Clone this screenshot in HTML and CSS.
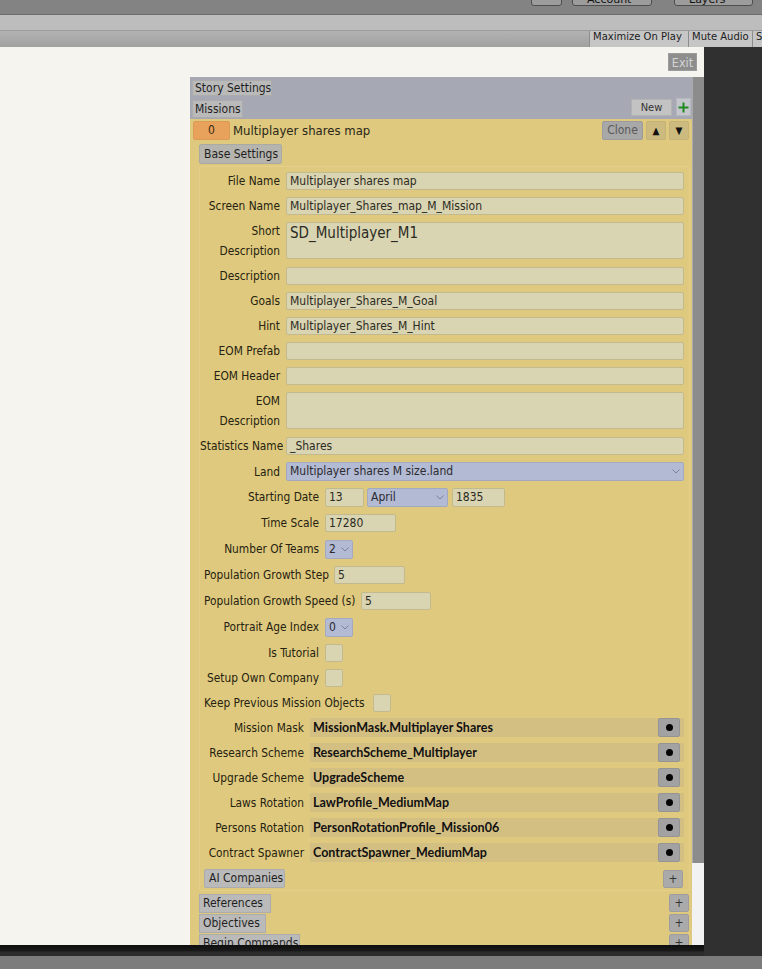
FILE: index.html
```html
<!DOCTYPE html>
<html>
<head>
<meta charset="utf-8">
<link rel="stylesheet" href="styles.css">
</head>
<body>
<div class="topbar">
  <div class="tb-btn tb-icon"></div>
  <div class="tb-btn tb-account">Account</div>
  <div class="tb-btn tb-layers">Layers</div>
</div>
<div class="band"></div>
<div class="toolbar">
  <span class="tool">Maximize On Play</span>
  <span class="tool">Mute Audio</span>
  <span class="tool tool-cut">Stats</span>
</div>
<div class="main">
  <div class="gameview">
    <div class="exit-row"><span class="exit">Exit</span></div>
    <div class="panel">
      <div class="panel-body">
        <div class="header">
          <div class="tab tab-story">Story Settings</div>
          <div class="header-row">
            <div class="tab tab-missions">Missions</div>
            <div class="btn-new">New</div>
            <div class="btn-plus-green">
              <svg width="11" height="11" viewBox="0 0 11 11"><path d="M5.5 0.5v10M0.5 5.5h10" stroke="#1f8a1f" stroke-width="2"/></svg>
            </div>
          </div>
        </div>
        <div class="yellow">
          <div class="mission-row">
            <div class="idx">0</div>
            <div class="mission-name">Multiplayer shares map</div>
            <div class="btn-clone">Clone</div>
            <div class="btn-arrow">▲</div>
            <div class="btn-arrow">▼</div>
          </div>
          <div class="tab tab-base">Base Settings</div>
          <div class="group">
            <div class="row"><div class="lbl w80">File Name</div><div class="field grow">Multiplayer shares map</div></div>
            <div class="row"><div class="lbl w80">Screen Name</div><div class="field grow">Multiplayer_Shares_map_M_Mission</div></div>
            <div class="row row-tall"><div class="lbl w80 two">Short<br>Description</div><div class="field grow area big">SD_Multiplayer_M1</div></div>
            <div class="row"><div class="lbl w80">Description</div><div class="field grow"></div></div>
            <div class="row"><div class="lbl w80">Goals</div><div class="field grow">Multiplayer_Shares_M_Goal</div></div>
            <div class="row"><div class="lbl w80">Hint</div><div class="field grow">Multiplayer_Shares_M_Hint</div></div>
            <div class="row"><div class="lbl w80">EOM Prefab</div><div class="field grow"></div></div>
            <div class="row"><div class="lbl w80">EOM Header</div><div class="field grow"></div></div>
            <div class="row row-tall"><div class="lbl w80 two">EOM<br>Description</div><div class="field grow area"></div></div>
            <div class="row r26"><div class="lbl w80">Statistics Name</div><div class="field grow">_Shares</div></div>
            <div class="row"><div class="lbl w80">Land</div><div class="drop grow">Multiplayer shares M size.land<svg class="chev" width="8" height="5" viewBox="0 0 8 5"><path d="M0.5 0.5L4 4L7.5 0.5" fill="none" stroke="#7d8296" stroke-width="1"/></svg></div></div>
            <div class="row r26"><div class="lbl w119">Starting Date</div><div class="field f-day">13</div><div class="drop d-month">April<svg class="chev" width="8" height="5" viewBox="0 0 8 5"><path d="M0.5 0.5L4 4L7.5 0.5" fill="none" stroke="#7d8296" stroke-width="1"/></svg></div><div class="field f-year">1835</div></div>
            <div class="row r26"><div class="lbl w119">Time Scale</div><div class="field f-num">17280</div></div>
            <div class="row r26"><div class="lbl w119">Number Of Teams</div><div class="drop d-small">2<svg class="chev" width="8" height="5" viewBox="0 0 8 5"><path d="M0.5 0.5L4 4L7.5 0.5" fill="none" stroke="#7d8296" stroke-width="1"/></svg></div></div>
            <div class="row r26 pl4"><div class="lbl left w126">Population Growth Step</div><div class="field f-num ml4">5</div></div>
            <div class="row r26 pl4"><div class="lbl left w152">Population Growth Speed (s)</div><div class="field f-num2 ml5">5</div></div>
            <div class="row r26"><div class="lbl w119">Portrait Age Index</div><div class="drop d-small">0<svg class="chev" width="8" height="5" viewBox="0 0 8 5"><path d="M0.5 0.5L4 4L7.5 0.5" fill="none" stroke="#7d8296" stroke-width="1"/></svg></div></div>
            <div class="row"><div class="lbl w119">Is Tutorial</div><div class="check"></div></div>
            <div class="row"><div class="lbl w119">Setup Own Company</div><div class="check"></div></div>
            <div class="row pl4"><div class="lbl left w164">Keep Previous Mission Objects</div><div class="check ml5"></div></div>
            <div class="row"><div class="lbl w104">Mission Mask</div><div class="obj grow"><span class="obj-text">MissionMask.Multiplayer Shares</span><span class="dot-btn"><i></i></span></div></div>
            <div class="row"><div class="lbl w104">Research Scheme</div><div class="obj grow"><span class="obj-text">ResearchScheme_Multiplayer</span><span class="dot-btn"><i></i></span></div></div>
            <div class="row"><div class="lbl w104">Upgrade Scheme</div><div class="obj grow"><span class="obj-text">UpgradeScheme</span><span class="dot-btn"><i></i></span></div></div>
            <div class="row"><div class="lbl w104">Laws Rotation</div><div class="obj grow"><span class="obj-text">LawProfile_MediumMap</span><span class="dot-btn"><i></i></span></div></div>
            <div class="row"><div class="lbl w104">Persons Rotation</div><div class="obj grow"><span class="obj-text">PersonRotationProfile_Mission06</span><span class="dot-btn"><i></i></span></div></div>
            <div class="row"><div class="lbl w104">Contract Spawner</div><div class="obj grow"><span class="obj-text">ContractSpawner_MediumMap</span><span class="dot-btn"><i></i></span></div></div>
            <div class="ai-row">
              <div class="tab tab-ai">AI Companies</div>
              <div class="btn-plus">+</div>
            </div>
          </div>
          <div class="sect-row"><div class="tab tab-ref">References</div><div class="btn-plus">+</div></div>
          <div class="sect-row"><div class="tab tab-obj">Objectives</div><div class="btn-plus">+</div></div>
          <div class="sect-row"><div class="tab tab-begin">Begin Commands</div><div class="btn-plus">+</div></div>
        </div>
      </div>
      <div class="scrollbar"><div class="thumb"></div></div>
    </div>
  </div>
  <div class="dark"></div>
</div>
<div class="bottom-edge"><div class="be-left"></div><div class="be-right"></div></div>
<div class="bottom-gray"></div>
</body>
</html>
```
FILE: styles.css
```css
* { box-sizing: border-box; }
html, body { margin: 0; padding: 0; }
body {
  width: 762px;
  height: 969px;
  overflow: hidden;
  background: #7c7c7c;
  font-family: "DejaVu Sans Condensed", "DejaVu Sans", sans-serif;
  color: #2a2718;
}

/* top window chrome */
.topbar {
  height: 15px;
  background: #838383;
  border-bottom: 1px solid #6c6c6c;
  display: flex;
  align-items: flex-end;
  padding: 0 9px 8px 0;
  overflow: hidden;
}
.tb-btn {
  height: 20px;
  flex: none;
  background: #9c9c9c;
  border: 1px solid #4e4e4e;
  border-radius: 3px;
  font: 11px "DejaVu Sans", sans-serif;
  color: #111;
  line-height: 14px;
  padding: 6px 0 0 14px;
  overflow: hidden;
}
.tb-icon { width: 31px; margin-left: auto; }
.tb-account { width: 80px; margin-left: 10px; }
.tb-layers { width: 79px; margin-left: 22px; }

.band {
  height: 16px;
  background: #bdbdbd;
  border-bottom: 1px solid #9b9b9b;
}
.toolbar {
  height: 16px;
  background: linear-gradient(#b3b3b3, #a0a0a0);
  display: flex;
  justify-content: flex-end;
  overflow: hidden;
}
.tool {
  flex: none;
  height: 16px;
  line-height: 16px;
  padding: 0 4px 0 3px;
  background: #c6c6c6;
  border-left: 1px solid #8d8d8d;
  font: 10px "DejaVu Sans", sans-serif;
  color: #1c1c1c;
  white-space: nowrap;
}
.tool:first-child { width: 99px; }
.tool:nth-child(2) { width: 64px; }
.tool-cut { width: 40px; margin-right: -30px; }

/* main area */
.main {
  height: 898px;
  display: flex;
}
.gameview {
  width: 704px;
  background: #f6f4ee;
  padding-top: 6px;
  overflow: hidden;
}
.dark { flex: 1; background: #303030; }
.exit-row {
  height: 18px;
  display: flex;
  justify-content: flex-end;
  padding-right: 7px;
}
.exit {
  width: 29px;
  height: 18px;
  background: #8d8d8d;
  border: 1px solid #9c9c9c;
  color: #d4d4d4;
  font-size: 12.5px;
  line-height: 17px;
  text-align: center;
}

.panel {
  margin: 6px 0 0 190px;
  height: 868px;
  display: flex;
  overflow: hidden;
}
.panel-body { width: 502px; flex: none; }
.scrollbar {
  flex: 1;
  background: #f2f2f2;
}
.thumb {
  height: 786px;
  background: #8c8c8c;
  border-left: 1px solid #aaaaaa;
}

/* header */
.header {
  height: 42px;
  background: #a6a9b4;
  padding: 3px 1px 0 2px;
}
.tab {
  background: #bababa;
  border: 1px solid #acacac;
  font-size: 12px;
  line-height: 15px;
  color: #1f1f1f;
  padding-left: 2px;
  white-space: nowrap;
  overflow: hidden;
}
.tab-story { width: 80px; height: 16px; }
.header-row {
  margin-top: 3px;
  display: flex;
  align-items: flex-start;
}
.tab-missions { width: 51px; height: 18px; margin-top: 1px; line-height: 16px; }
.btn-new {
  margin-left: auto;
  width: 41px;
  height: 17px;
  background: #c3c3c3;
  border: 1px solid #b3b3b3;
  font-size: 11px;
  line-height: 15px;
  text-align: center;
  color: #333;
}
.btn-plus-green {
  width: 15px;
  height: 18px;
  margin-left: 4px;
  margin-top: -1px;
  background: #c4c6cc;
  border: 1px solid #b6b8c0;
  display: flex;
  align-items: center;
  justify-content: center;
}

/* yellow area */
.yellow {
  background: #dfc97e;
  padding-top: 2px;
  height: 826px;
}
.mission-row {
  display: flex;
  align-items: center;
  height: 19px;
  margin: 0 3px;
}
.idx {
  width: 37px;
  height: 19px;
  background: #e8a25c;
  border: 1px solid #dd9a55;
  border-radius: 2px;
  font-size: 12px;
  line-height: 17px;
  text-align: center;
  color: #3a2a12;
}
.mission-name {
  margin-left: 3px;
  font-size: 13px;
  color: #2a2718;
  flex: 1;
}
.btn-clone {
  width: 41px;
  height: 19px;
  background: #a8a8a8;
  border: 1px solid #9c9c9c;
  border-radius: 2px;
  font-size: 12px;
  line-height: 17px;
  text-align: center;
  color: #5a5a5a;
}
.btn-arrow {
  width: 20px;
  height: 19px;
  margin-left: 3px;
  background: #cdba7f;
  border: 1px solid #c4b277;
  border-radius: 2px;
  font-size: 10px;
  line-height: 17px;
  text-align: center;
  color: #111;
}
.tab-base {
  margin: 4px 0 0 9px;
  width: 83px;
  height: 20px;
  line-height: 18px;
  padding-left: 4px;
  background: #b5b4ae;
  border-color: #aaa9a2;
  border-radius: 2px;
}

.group {
  margin: 2px 2px 0 9px;
  border: 1px solid #e5d08b;
  border-radius: 3px;
  padding: 1px 0 2px 0;
}
.row {
  display: flex;
  align-items: center;
  height: 25px;
  padding-right: 5px;
}
.row.r26 { height: 26px; }
.row.row-tall { height: 45px; }
.row.pl4 { padding-left: 4px; }
.lbl {
  flex: none;
  font-size: 11.8px;
  text-align: right;
  white-space: nowrap;
  color: #25220f;
}
.lbl.left { text-align: left; }
.lbl.two { line-height: 20px; }
.w80 { width: 80px; margin-right: 6px; }
.w104 { width: 104px; margin-right: 6px; }
.w119 { width: 119px; margin-right: 6px; }
.w126 { width: 126px; }
.w152 { width: 152px; }
.w164 { width: 164px; }
.ml4 { margin-left: 4px; }
.ml5 { margin-left: 5px; }
.grow { flex: 1; }

.field {
  height: 18px;
  background: #d9d4b1;
  border: 1px solid #c3b98e;
  border-radius: 2px;
  font-size: 12px;
  line-height: 16px;
  padding-left: 3px;
  color: #2b2b24;
  white-space: nowrap;
  overflow: hidden;
}
.field.area {
  height: 37px;
  align-self: center;
}
.field.big {
  font-size: 15px;
  line-height: 20px;
}
.drop {
  height: 19px;
  background: #b3bad3;
  border: 1px solid #a3a9c0;
  border-radius: 2px;
  font-size: 12px;
  line-height: 17px;
  padding-left: 3px;
  color: #2b2b30;
  display: flex;
  align-items: center;
  white-space: nowrap;
}
.drop .chev { margin-left: auto; margin-right: 3px; flex: none; }
.f-day { width: 39px; height: 19px; line-height: 17px; }
.d-month { width: 81px; margin-left: 3px; }
.f-year { width: 53px; height: 19px; line-height: 17px; margin-left: 4px; }
.f-num { width: 71px; }
.f-num2 { width: 70px; }
.d-small { width: 28px; }

.check {
  width: 18px;
  height: 18px;
  background: #d9d4b1;
  border: 1px solid #c3b98e;
  border-radius: 2px;
}

.obj {
  height: 19px;
  background: #d4bf83;
  display: flex;
  align-items: center;
  padding: 0 4px 0 3px;
}
.obj-text {
  font-family: "Lato", "DejaVu Sans", sans-serif;
  font-weight: 700;
  font-size: 12.5px;
  color: #111;
  white-space: nowrap;
}
.dot-btn {
  margin-left: auto;
  width: 22px;
  height: 19px;
  background: #a2a2a2;
  border: 1px solid #949494;
  border-radius: 2px;
  display: flex;
  align-items: center;
  justify-content: center;
}
.dot-btn i {
  display: block;
  width: 7px;
  height: 7px;
  border-radius: 50%;
  background: #050505;
}

.ai-row {
  display: flex;
  align-items: center;
  margin-top: 4px;
  padding: 0 6px 0 4px;
}
.tab-ai {
  width: 81px;
  height: 19px;
  line-height: 17px;
  padding-left: 4px;
  border-radius: 2px;
}
.btn-plus {
  margin-left: auto;
  width: 20px;
  height: 18px;
  background: #aaaaaa;
  border: 1px solid #9d9d9d;
  border-radius: 2px;
  font-size: 12px;
  line-height: 16px;
  text-align: center;
  color: #333;
}
.sect-row {
  display: flex;
  align-items: flex-start;
  margin: 0 3px 0 9px;
  height: 20px;
}
.group + .sect-row { margin-top: 3px; }
.sect-row .tab { height: 19px; line-height: 17px; padding-left: 3px; }
.tab-ref { width: 72px; }
.tab-obj { width: 67px; }
.tab-begin { width: 101px; }

/* bottom chrome */
.bottom-edge { height: 11px; display: flex; }
.be-left { width: 704px; background: linear-gradient(#0e0e0e 0, #1a1a1a 6px, #2c2c2c 7px, #2c2c2c 11px); }
.be-right { flex: 1; background: #303030; }
.bottom-gray { height: 13px; background: #7c7c7c; }
```
